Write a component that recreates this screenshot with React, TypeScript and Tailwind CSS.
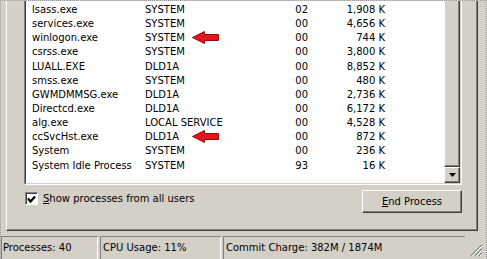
const rows = [
  { name: "lsass.exe", user: "SYSTEM", cpu: "02", mem: "1,908 K" },
  { name: "services.exe", user: "SYSTEM", cpu: "00", mem: "4,656 K" },
  { name: "winlogon.exe", user: "SYSTEM", cpu: "00", mem: "744 K", arrow: true },
  { name: "csrss.exe", user: "SYSTEM", cpu: "00", mem: "3,800 K" },
  { name: "LUALL.EXE", user: "DLD1A", cpu: "00", mem: "8,852 K" },
  { name: "smss.exe", user: "SYSTEM", cpu: "00", mem: "480 K" },
  { name: "GWMDMMSG.exe", user: "DLD1A", cpu: "00", mem: "2,736 K" },
  { name: "Directcd.exe", user: "DLD1A", cpu: "00", mem: "6,172 K" },
  { name: "alg.exe", user: "LOCAL SERVICE", cpu: "00", mem: "4,528 K" },
  { name: "ccSvcHst.exe", user: "DLD1A", cpu: "00", mem: "872 K", arrow: true },
  { name: "System", user: "SYSTEM", cpu: "00", mem: "236 K" },
  { name: "System Idle Process", user: "SYSTEM", cpu: "93", mem: "16 K" },
]

const RedArrow = () => (
  <svg width="28" height="14" viewBox="0 0 28 14" className="absolute left-[166px] top-0">
    <polygon
      points="0.5,6.5 12.5,0.5 12.5,3.5 26.5,3.5 26.5,9.5 12.5,9.5 12.5,12.5"
      fill="#e3141b"
      stroke="#9a0b0b"
      strokeWidth="1"
    />
  </svg>
)

export default function App() {
  return (
    <div className="flex h-[259px] w-[487px] flex-col overflow-hidden border-x border-t border-dotted border-[#9c9c9c] bg-[#d4d0c8] font-['DejaVu_Sans',sans-serif] text-[10px] text-black">
      {/* tab page */}
      <div className="ml-[5px] flex h-[230px] w-[472px] flex-col border-b border-l border-r border-b-[#404040] border-l-white border-r-[#404040] shadow-[inset_-1px_-1px_0_#808080]">
        {/* process list */}
        <div className="ml-[17px] h-[184px] w-[438px] border-b border-l border-r border-b-white border-l-[#808080] border-r-white">
          <div className="flex h-full border-b border-l border-r border-b-[#d4d0c8] border-l-[#404040] border-r-[#d4d0c8]">
            <div className="flex-1 bg-white pt-[2px]">
              {rows.map((r) => (
                <div key={r.name} className="relative grid h-[14.15px] grid-cols-[113px_113px_50px_77px] pl-[6px] leading-[14px]">
                  <span>{r.name}</span>
                  <span>{r.user}</span>
                  <span className="text-right">{r.cpu}</span>
                  <span className="text-right">{r.mem}</span>
                  {r.arrow && <RedArrow />}
                </div>
              ))}
            </div>
            {/* scrollbar */}
            <div className="flex w-[16px] flex-col">
              <div className="flex-1 border-b border-l border-r border-b-[#404040] border-l-white border-r-[#404040] shadow-[inset_-1px_-1px_0_#808080]" />
              <div className="flex h-[16px] items-center justify-center border-b border-l border-r border-t border-b-[#404040] border-l-white border-r-[#404040] border-t-white shadow-[inset_-1px_-1px_0_#808080]">
                <svg width="7" height="4" viewBox="0 0 7 4">
                  <polygon points="0,0 7,0 3.5,4" fill="#000" />
                </svg>
              </div>
            </div>
          </div>
        </div>

        {/* checkbox + button */}
        <div className="mt-[5px] flex items-start justify-between">
          <label className="ml-[18px] mt-[2px] flex items-center gap-[5px]">
            <span className="flex h-[13px] w-[13px] items-center justify-center border border-b-white border-l-[#808080] border-r-white border-t-[#808080] bg-white shadow-[inset_1px_1px_0_#404040]">
              <svg width="9" height="9" viewBox="0 0 9 9" className="mt-[1px]">
                <path d="M1 3.5 L3.5 6.5 L8 1.5" fill="none" stroke="#000" strokeWidth="2.2" />
              </svg>
            </span>
            <span className="leading-[13px]">
              <span className="underline">S</span>how processes from all users
            </span>
          </label>
          <button className="mr-[15px] h-[23px] w-[100px] border border-b-[#404040] border-l-white border-r-[#404040] border-t-white bg-[#d4d0c8] text-[10px] shadow-[inset_-1px_-1px_0_#808080]">
            <span className="underline">E</span>nd Process
          </button>
        </div>
      </div>

      {/* status bar */}
      <div className="flex flex-1 items-end gap-[2px] pt-[4px]">
        <div className="h-[23px] w-[97px] border-l border-t border-l-[#808080] border-t-[#808080] pl-[1px] pt-[4px] leading-[14px] shadow-[inset_-1px_0_0_#fff]">
          Processes: 40
        </div>
        <div className="h-[23px] w-[121px] border-l border-t border-l-[#808080] border-t-[#808080] pl-[2px] pt-[4px] leading-[14px] shadow-[inset_-1px_0_0_#fff]">
          CPU Usage: 11%
        </div>
        <div className="h-[23px] w-[242px] border-l border-t border-l-[#808080] border-t-[#808080] pl-[2px] pt-[4px] leading-[14px]">
          Commit Charge: 382M / 1874M
        </div>
        <div className="relative h-[23px] flex-1">
          <svg width="13" height="13" viewBox="0 0 13 13" className="absolute bottom-[2px] right-[3px]">
            <path d="M12 1 L1 12 M12 5 L5 12 M12 9 L9 12" stroke="#808080" strokeWidth="1.2" />
            <path d="M12 2 L2 12 M12 6 L6 12 M12 10 L10 12" stroke="#fff" strokeWidth="1" />
          </svg>
        </div>
      </div>
    </div>
  )
}
